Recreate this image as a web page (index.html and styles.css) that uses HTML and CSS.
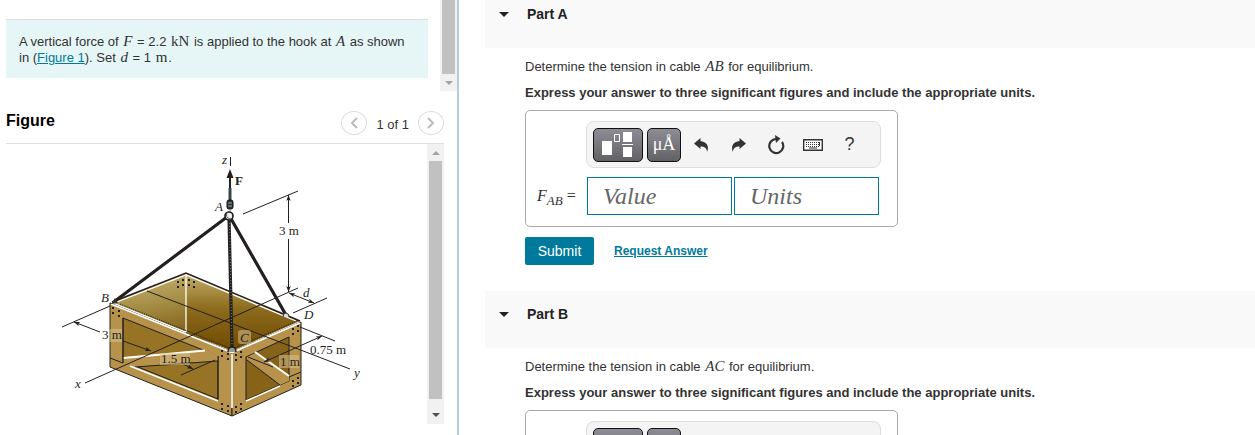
FILE: index.html
```
<!DOCTYPE html>
<html lang="en">
<head>
    <meta charset="UTF-8">
    <meta name="viewport" content="width=device-width, initial-scale=1.0">
    <title>Cable Tension - Homework</title>
    <link rel="stylesheet" href="styles.css">
</head>
<body>
    <!-- Shared icons -->
    <svg class="sprite" aria-hidden="true">
        <symbol id="template" viewBox="0 0 34 26">
            <path d="M1 9h10v14H1zM22 0h9v10h-9zM22 15h9v10h-9zM21 12h11v1H21z" fill="#fff"/>
            <path d="M13.500 2.500h5v7h-5z" fill="none" stroke="#fff"/>
        </symbol>
        <symbol id="undo" viewBox="0 0 16 16">
            <path d="M0 6.500 6.500 1v3.300C11.500 4.300 16 8.500 13 15c0-4-2.500-5.500-6.500-5.500V12z" fill="#333"/>
        </symbol>
        <symbol id="redo" viewBox="0 0 16 16">
            <path d="M15 6.500 8.500 1v3.300C3.500 4.300-1 8.500 2 15c0-4 2.500-5.500 6.500-5.500V12z" fill="#333"/>
        </symbol>
        <symbol id="reset" viewBox="0 0 18 20">
            <path d="M9 4A7 7 0 1 0 15 7" fill="none" stroke="#333" stroke-width="2.200"/>
            <path d="M8 0 13.500 3.500 9 8z" fill="#333"/>
        </symbol>
        <symbol id="keyboard" viewBox="0 0 20 12">
            <path d="M.700.700h18.600v10.600H.700z" fill="#fff" stroke="#333" stroke-width="1.400"/>
            <path d="M3 3.500h14M3 5.500h14M3 7.500h14" stroke="#333" stroke-dasharray="1 1"/>
            <path d="M6 9h8M16.500 3v4" stroke="#333"/>
        </symbol>
    </svg>

    <div class="layout">
        <aside class="left">
            <!-- Problem statement -->
            <div class="intro-pane">
                <div class="intro">
                    A vertical force of <i class="math">F</i> = 2.2 <span class="math">kN</span> is applied to the hook at <i class="math">A</i> as shown in (<a href="#figure">Figure 1</a>). Set <i class="math">d</i> = 1 <span class="math">m</span>.
                </div>
                <div class="scrollbar">
                    <div class="thumb"></div>
                    <span class="arrow down light"></span>
                </div>
            </div>

            <!-- Figure -->
            <div class="figure-pane" id="figure">
                <div class="figure-header">
                    <h2>Figure</h2>
                    <div class="pager">
                        <button class="round" aria-label="Previous figure"><svg width="8" height="12" viewBox="0 0 8 12"><path d="M7 1 2 6l5 5"/></svg></button>
                        <span>1 of 1</span>
                        <button class="round" aria-label="Next figure"><svg width="8" height="12" viewBox="0 0 8 12"><path d="m1 1 5 5-5 5"/></svg></button>
                    </div>
                </div>
                <div class="figure-body">
                    <svg class="crate" width="421" height="280" viewBox="6 144 421 280" role="img" aria-label="Crate lifted by three cables from hook A">
                        <defs>
                            <linearGradient id="insideLeft" x1="0" y1="0" x2="0.300" y2="1">
                                <stop offset="0" stop-color="#c9b978"/>
                                <stop offset="0.500" stop-color="#a38a42"/>
                                <stop offset="1" stop-color="#765307"/>
                            </linearGradient>
                            <linearGradient id="insideRight" x1="0" y1="0" x2="0" y2="1">
                                <stop offset="0" stop-color="#c3b06c"/>
                                <stop offset="0.450" stop-color="#8d6c1e"/>
                                <stop offset="1" stop-color="#6f4900"/>
                            </linearGradient>
                            <marker id="tip" viewBox="0 0 8 6" refX="8" refY="3" markerWidth="6" markerHeight="5" markerUnits="userSpaceOnUse" orient="auto-start-reverse">
                                <path d="M0 0 8 3 0 6 2 3z" fill="#231f20"/>
                            </marker>
                        </defs>

                        <!-- inside of the crate -->
                        <path d="M112 302 186 273V334L232 350z" fill="url(#insideLeft)"/>
                        <path d="M186 273 300 321 232 351 186 332z" fill="url(#insideRight)"/>
                        <path d="M112 302 186 273 300 321" fill="none" stroke="#231f20" stroke-width="1.500"/>
                        <path d="M117 302 186 275 296 321M186 276V332" fill="none" stroke="#fff" stroke-width="1.300"/>
                        <g class="nails">
                            <path d="M178 281v9M183 279v9M189 279v9M194 281v9" />
                        </g>

                        <!-- long side -->
                        <path d="M110 303 232 352V416L110 367z" fill="#b6924a" stroke="#231f20"/>
                        <path d="M123 318 218 356V399L123 361z" fill="#977326" stroke="#231f20"/>
                        <path d="M123.500 357 205 350 218 355V361L135 367 123.500 362z" fill="#b6924a"/>
                        <path d="M123.500 358 205 350.500" stroke="#fff" stroke-width="2"/>
                        <path d="M135 367 218 361M110 358 123 363M123 318V363M218 356V400" stroke="#231f20" fill="none"/>
                        <path d="M130 366 218 401" stroke="#fff" stroke-width="1.500"/>

                        <!-- short side -->
                        <path d="M232 352 301 322V385L232 416z" fill="#b6924a" stroke="#231f20"/>
                        <path d="M246 357 289 337V381L246 400z" fill="#866319" stroke="#231f20"/>
                        <path d="M255 353 289 376V381L280 385 247 360V357z" fill="#b6924a"/>
                        <path d="M255 352 289 376" stroke="#fff" stroke-width="2"/>
                        <path d="M247 360 280 385M289 377 301 372" stroke="#231f20"/>
                        <path d="M246 401 280 386" stroke="#fff" stroke-width="1.500"/>
                        <path d="M111 304 232 352.500 300 323M232 354V408" stroke="#fff" stroke-width="1.700" fill="none"/>
                        <path d="M120 304 232 349 297 321" stroke="#231f20" stroke-dasharray="1 1" fill="none"/>
                        <g class="nails">
                            <path d="M113 307v8M119 310v8M222 350v9M228 353v9M236 354v7M241 351v8M293 328v7M298 325v8M222 403v8M228 405v8M236 406v8M241 403v8M293 380v7M298 377v8"/>
                        </g>

                        <!-- axes and dimension lines -->
                        <g class="lines">
                            <path d="M85 383 298 288M147 291 350 369M230.500 157V166"/>
                            <path d="M62 327 110 306M181 375 215 360"/>
                            <path d="M100 332 74 322" marker-end="url(#tip)"/>
                            <path d="M123 341 151 351" marker-end="url(#tip)"/>
                            <path d="M181 363 193 369" marker-end="url(#tip)"/>
                            <path d="M243 214 298 191"/>
                            <path d="M288.500 223V195" marker-end="url(#tip)"/>
                            <path d="M288.500 239V292" marker-end="url(#tip)"/>
                            <path d="M289 293 314 303" marker-start="url(#tip)" marker-end="url(#tip)"/>
                            <path d="M293 313 327 298M300 327 335 341"/>
                            <path d="M264 362 322 336" marker-start="url(#tip)" marker-end="url(#tip)"/>
                            <path d="M248 357 273 367"/>
                        </g>

                        <!-- cables, hook and force -->
                        <path d="M227 217 115 301M230 217 286 315M229 217 232 348" stroke="#231f20" stroke-width="3.200"/>
                        <path d="M229.500 220 232 346" stroke="#777" stroke-dasharray="1 2"/>
                        <path d="M230 188V200" stroke="#3a4447" stroke-width="3"/>
                        <path d="M230 188V176" stroke="#231f20" stroke-width="2"/>
                        <path d="M230 169 233.500 178H226.500z" fill="#231f20"/>
                        <rect x="227" y="200" width="6" height="9" rx="2" fill="#2c3538" stroke="#111"/>
                        <path d="M228 203h4M228 206h4" stroke="#91a0a5"/>
                        <circle cx="229" cy="216" r="4" fill="#eee" stroke="#231f20" stroke-width="1.700"/>
                        <path d="M231 211C225 211 225 219 231 219" fill="none" stroke="#555"/>
                        <path d="M111 304 115 298 118 303z" fill="#333"/>
                        <path d="M283 317a3 4 0 0 1 6 0" fill="#ddd" stroke="#333"/>
                        <path d="M228 352a4 5 0 0 1 8 0" fill="#999" stroke="#222" stroke-width="1.500"/>

                        <!-- labels -->
                        <g fill="#d7c08a" fill-opacity="0.550">
                            <rect x="109" y="329" width="13" height="13"/>
                            <rect x="160" y="353" width="30" height="12"/>
                            <rect x="279" y="355" width="20" height="13"/>
                            <rect x="238" y="330" width="13" height="14" rx="3"/>
                        </g>
                        <g class="labels">
                            <text x="222" y="164" class="var">z</text>
                            <text x="235" y="185" class="vec">F</text>
                            <text x="215" y="211" class="var">A</text>
                            <text x="279" y="235">3 m</text>
                            <text x="101" y="302" class="var">B</text>
                            <text x="303" y="297" class="var">d</text>
                            <text x="304" y="319" class="var">D</text>
                            <text x="240" y="342" class="var">C</text>
                            <text x="102" y="339">3 m</text>
                            <text x="161" y="363">1.5 m</text>
                            <text x="280" y="366">1 m</text>
                            <text x="310" y="354">0.75 m</text>
                            <text x="75" y="388" class="var">x</text>
                            <text x="354" y="377" class="var">y</text>
                        </g>
                    </svg>
                    <div class="scrollbar">
                        <span class="arrow up light"></span>
                        <div class="thumb"></div>
                        <span class="arrow down"></span>
                    </div>
                </div>
            </div>
        </aside>

        <main class="right">
            <section class="part">
                <div class="part-header">
                    <button class="toggle" aria-label="Collapse Part A"></button>
                    <h2>Part A</h2>
                </div>
                <div class="part-body">
                    <p>Determine the tension in cable <i class="math">AB</i> for equilibrium.</p>
                    <p class="hint">Express your answer to three significant figures and include the appropriate units.</p>
                    <form class="answer">
                        <div class="toolbar">
                            <button type="button" class="dark wide" aria-label="Templates"><svg width="34" height="26"><use href="#template"/></svg></button>
                            <button type="button" class="dark">μÅ</button>
                            <button type="button" class="tool" aria-label="Undo"><svg width="16" height="16"><use href="#undo"/></svg></button>
                            <button type="button" class="tool" aria-label="Redo"><svg width="16" height="16"><use href="#redo"/></svg></button>
                            <button type="button" class="tool" aria-label="Reset"><svg width="18" height="20"><use href="#reset"/></svg></button>
                            <button type="button" class="tool" aria-label="Keyboard shortcuts"><svg width="20" height="12"><use href="#keyboard"/></svg></button>
                            <button type="button" class="tool">?</button>
                        </div>
                        <label for="value-a"><i>F<sub>AB</sub></i> =</label>
                        <div class="fields">
                            <input id="value-a" type="text" placeholder="Value">
                            <input type="text" placeholder="Units" aria-label="Units">
                        </div>
                    </form>
                    <div class="actions">
                        <button class="submit">Submit</button>
                        <a href="#">Request Answer</a>
                    </div>
                </div>
            </section>

            <section class="part">
                <div class="part-header">
                    <button class="toggle" aria-label="Collapse Part B"></button>
                    <h2>Part B</h2>
                </div>
                <div class="part-body">
                    <p>Determine the tension in cable <i class="math">AC</i> for equilibrium.</p>
                    <p class="hint">Express your answer to three significant figures and include the appropriate units.</p>
                    <form class="answer">
                        <div class="toolbar">
                            <button type="button" class="dark wide" aria-label="Templates"></button>
                            <button type="button" class="dark" aria-label="Units"></button>
                        </div>
                    </form>
                </div>
            </section>
        </main>
    </div>
</body>
</html>
```
FILE: styles.css
```
* {
    box-sizing: border-box;
}
body {
    margin: 0;
    font-family: "Liberation Sans", Arial, sans-serif;
    font-size: 13px;
    line-height: 16px;
    color: #333;
    background: #fff;
}
h2, p {
    margin: 0;
}
a {
    color: #007a9c;
}
button {
    font-family: inherit;
    padding: 0;
    border: none;
    background: none;
    cursor: pointer;
}
.sprite {
    position: absolute;
    width: 0;
    height: 0;
}
.layout {
    display: flex;
    height: 100vh;
    overflow: hidden;
}
.math {
    margin: 0 1px;
    font-family: "Liberation Serif", serif;
    font-size: 15px;
    line-height: 1;
}

/* left column */
.left {
    flex: 0 0 459px;
    display: flex;
    flex-direction: column;
    border-right: 2px solid #b8cbdf;
}
.intro-pane {
    display: flex;
    justify-content: space-between;
    height: 91px;
    padding-left: 6px;
}
.intro {
    width: 422px;
    margin: 19px 0 13px;
    padding: 14px 16px 0 13px;
    border-top: 1px solid #ddd;
    background: #e6f6f6;
}
.figure-pane {
    padding: 20px 13px 0 6px;
}
.figure-header {
    display: flex;
    justify-content: space-between;
    height: 33px;
    border-bottom: 1px solid #ddd;
}
.figure-header h2 {
    font-size: 16px;
    line-height: 20px;
    color: #000;
}
.pager {
    display: flex;
    gap: 9px;
    height: 24px;
    line-height: 28px;
}
.round {
    display: flex;
    align-items: center;
    justify-content: center;
    width: 26px;
    height: 24px;
    border: 1px solid #ddd;
    border-radius: 50%;
}
.round path {
    fill: none;
    stroke: #bbb;
    stroke-width: 2;
}
.figure-body {
    display: flex;
    height: 280px;
}
.scrollbar {
    display: flex;
    flex-direction: column;
    flex: 0 0 17px;
    background: #f1f1f1;
}
.thumb {
    flex: 1;
    margin: 0 2px;
    background: #c1c1c1;
}
.arrow {
    height: 17px;
    display: flex;
    align-items: center;
    justify-content: center;
}
.arrow::before {
    content: "";
    border: 4px solid transparent;
}
.figure-body .arrow.down {
    height: 25px;
    padding-top: 6px;
}
.arrow.down::before {
    border-top-color: #505050;
    border-bottom: none;
}
.arrow.up::before {
    border-bottom-color: #a3a3a3;
    border-top: none;
}
.arrow.light.down::before {
    border-top-color: #a3a3a3;
}

/* crate drawing */
.crate {
    flex: none;
}
.lines {
    stroke: #231f20;
    stroke-width: 1;
    fill: none;
}
.nails {
    stroke: #231f20;
    stroke-width: 2;
    stroke-dasharray: 2 3;
}
.labels {
    font-family: "Liberation Serif", serif;
    font-size: 13px;
    fill: #231f20;
}
.var {
    font-style: italic;
}
.vec {
    font-weight: bold;
}

/* right column */
.right {
    flex: 1;
    margin: -9px 0 0 26px;
}
.part-header {
    display: flex;
    align-items: flex-start;
    gap: 18px;
    height: 57px;
    padding: 15px 14px 0;
    background: #f9f9f9;
}
.part-header h2 {
    font-size: 14px;
    line-height: 16px;
    color: #222;
}
.toggle {
    height: 16px;
}
.toggle::before {
    content: "";
    display: block;
    border: 5px solid transparent;
    border-top-color: #222;
    border-bottom: none;
}
.part-body {
    padding: 11px 40px 26px;
}
.part-body p {
    line-height: 16px;
}
.part-body .hint {
    margin: 10px 0 9px;
    font-weight: bold;
}
.answer {
    display: grid;
    grid-template-columns: 49px 295px;
    gap: 9px 0;
    width: 373px;
    padding: 10px 11px 11px;
    border: 1px solid #aaa;
    border-radius: 5px;
    align-items: center;
}
.toolbar {
    grid-column: 2;
    display: flex;
    align-items: center;
    gap: 4px;
    height: 47px;
    padding: 0 6px;
    border: 1px solid #ddd;
    border-radius: 8px;
    background: #f4f4f4;
}
.dark {
    display: flex;
    align-items: center;
    justify-content: center;
    width: 34px;
    height: 34px;
    border: 1px solid #111;
    border-radius: 5px;
    background: linear-gradient(#8e8c96, #626265);
    color: #fff;
    font-family: "Liberation Serif", serif;
    font-size: 18px;
}
.dark.wide {
    width: 50px;
}
.tool {
    display: flex;
    align-items: center;
    justify-content: center;
    width: 33px;
    height: 34px;
    color: #333;
    font-size: 18px;
}
.answer label {
    padding-top: 4px;
    font-family: "Liberation Serif", serif;
    font-size: 16px;
    white-space: nowrap;
}
.answer sub {
    font-size: 13px;
    line-height: 1;
}
.fields {
    display: flex;
    gap: 2px;
    padding: 0 2px 0 1px;
}
.fields input {
    flex: 1;
    min-width: 0;
    height: 38px;
    padding: 0 15px;
    border: 1px solid #007a9c;
    font-family: "Liberation Serif", serif;
    font-size: 24px;
    border-radius: 0;
}
.fields input::placeholder {
    color: #666;
    font-style: italic;
}
.actions {
    display: flex;
    align-items: center;
    gap: 20px;
    margin-top: 10px;
}
.submit {
    width: 69px;
    height: 28px;
    border-radius: 2px;
    background: #007a9c;
    color: #fff;
    font-size: 14px;
}
.actions a {
    font-size: 12px;
    font-weight: bold;
}
```
